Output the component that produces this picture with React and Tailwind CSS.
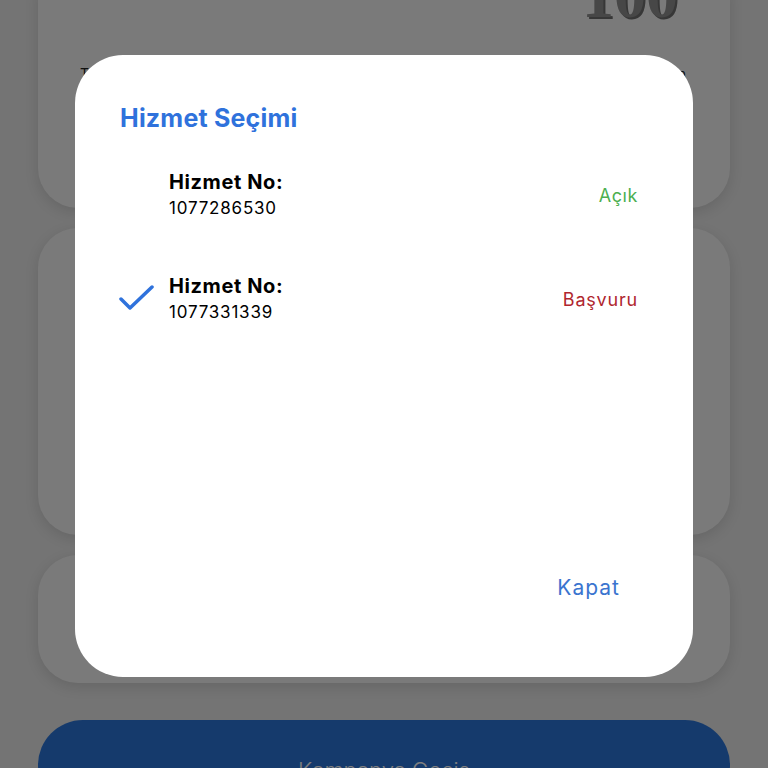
export default function App() {
  const font = { fontFamily: "Inter, 'Noto Sans', sans-serif" };
  return (
    <div className="relative w-[768px] h-[768px] overflow-hidden bg-[#e8e8e8]" style={font}>
      <div className="flex flex-col px-[38px] -mt-10">
        <div className="h-[248px] rounded-[40px] bg-[#f5f5f5] shadow-[0_4px_14px_rgba(0,0,0,0.12)] relative flex flex-col">
          <div className="flex justify-end pr-[52px] -mt-[16px] h-[84px] items-end">
            <span className="text-[64px] font-black text-[#8e8e8e] leading-none [text-shadow:2px_2px_0_#6e6e6e]" style={{ fontFamily: "'Liberation Serif', serif" }}>100</span>
          </div>
          <div className="flex justify-between pl-[42px] pr-[44px] mt-[38px] text-[14px] leading-[16px] text-[#222]">
            <span>Toplam</span>
            <span>Kalan</span>
          </div>
        </div>
        <div className="mt-[20px] h-[307px] rounded-[40px] bg-[#f5f5f5] shadow-[0_4px_14px_rgba(0,0,0,0.12)]" />
        <div className="mt-[20px] h-[128px] rounded-[40px] bg-[#f5f5f5] shadow-[0_4px_14px_rgba(0,0,0,0.12)]" />
        <div className="mt-[37px] h-[90px] rounded-[48px] bg-[#2a74d8] flex justify-center pt-[34px]">
          <span className="text-[22px] text-white font-light">Kampanya Geçiş</span>
        </div>
      </div>

      <div className="absolute inset-0 bg-black/50">
        <div className="absolute left-[75px] top-[55px] w-[618px] h-[622px] rounded-[48px] bg-white flex flex-col pl-[45px] pr-[55px]">
          <div className="mt-[47px] text-[25px] leading-[32px] font-bold text-[#2f72dc] tracking-[0.2px]">Hizmet Seçimi</div>
          <div className="mt-[35px] flex items-center">
            <div className="w-[49px]" />
            <div className="flex-1 flex flex-col">
              <span className="text-[20px] leading-[26px] font-bold text-black tracking-[0.6px]">Hizmet No:</span>
              <span className="text-[17px] leading-[26px] text-black tracking-[0.8px]">1077286530</span>
            </div>
            <span className="text-[18px] text-[#4caf50] tracking-[0.6px]">Açık</span>
          </div>
          <div className="mt-[52px] flex items-center">
            <div className="w-[49px]">
              <svg width="36" height="28" viewBox="0 0 36 28" className="-ml-[1px]">
                <path d="M2 14 L11 23 L33 2" fill="none" stroke="#2f72dc" strokeWidth="3.5" strokeLinecap="round" strokeLinejoin="round" />
              </svg>
            </div>
            <div className="flex-1 flex flex-col">
              <span className="text-[20px] leading-[26px] font-bold text-black tracking-[0.6px]">Hizmet No:</span>
              <span className="text-[17px] leading-[26px] text-black tracking-[0.8px]">1077331339</span>
            </div>
            <span className="text-[18px] text-[#b0262e] tracking-[0.8px]">Başvuru</span>
          </div>
          <div className="mt-auto mb-[74px] flex justify-end pr-[18px]">
            <span className="text-[21px] text-[#3a74cf] tracking-[1px]">Kapat</span>
          </div>
        </div>
      </div>
    </div>
  );
}
